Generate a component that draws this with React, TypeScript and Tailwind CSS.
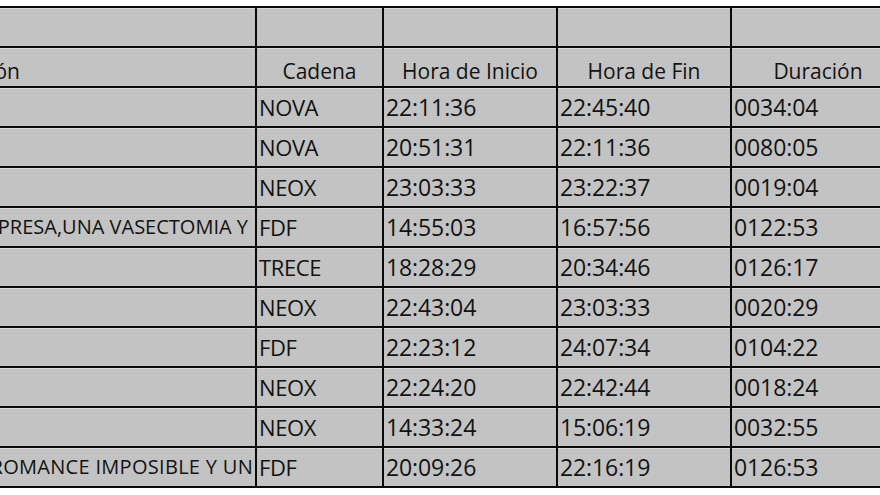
import React from 'react';

type Row = {
  desc?: string;
  descCls?: string; // right offset + spacing for overflowing description text
  cadena: string;
  inicio: string;
  fin: string;
  duracion: string;
};

const rows: Row[] = [
  { cadena: 'NOVA', inicio: '22:11:36', fin: '22:45:40', duracion: '0034:04' },
  { cadena: 'NOVA', inicio: '20:51:31', fin: '22:11:36', duracion: '0080:05' },
  { cadena: 'NEOX', inicio: '23:03:33', fin: '23:22:37', duracion: '0019:04' },
  {
    desc: 'UNA SORPRESA,UNA VASECTOMIA Y',
    descCls: 'mr-[7px] tracking-[0px]',
    cadena: 'FDF',
    inicio: '14:55:03',
    fin: '16:57:56',
    duracion: '0122:53',
  },
  { cadena: 'TRECE', inicio: '18:28:29', fin: '20:34:46', duracion: '0126:17' },
  { cadena: 'NEOX', inicio: '22:43:04', fin: '23:03:33', duracion: '0020:29' },
  { cadena: 'FDF', inicio: '22:23:12', fin: '24:07:34', duracion: '0104:22' },
  { cadena: 'NEOX', inicio: '22:24:20', fin: '22:42:44', duracion: '0018:24' },
  { cadena: 'NEOX', inicio: '14:33:24', fin: '15:06:19', duracion: '0032:55' },
  {
    desc: 'UN ROMANCE IMPOSIBLE Y UN',
    descCls: 'mr-[2px] tracking-[0.3px]',
    cadena: 'FDF',
    inicio: '20:09:26',
    fin: '22:16:19',
    duracion: '0126:53',
  },
];

const cell = 'bg-[#c3c3c3] shadow-[inset_0_1px_0_#dadada] overflow-hidden';
const chanCell = `${cell} flex items-center pl-[2px] text-[22px] tracking-[-0.4px]`;
const timeCell = `${cell} flex items-center pl-[2px] text-[23px] tracking-[-0.1px]`;
const headCell = `${cell} flex items-center justify-center pt-[9px] text-[21px]`;

export default function App() {
  return (
    <div
      className="w-[880px] h-[495px] overflow-hidden bg-white pt-[6px] text-[#121212] font-medium"
      style={{ fontFamily: '"Open Sans", "Noto Sans", sans-serif' }}
    >
      <div className="grid w-max grid-cols-[255px_125px_172px_172px_172px] auto-rows-[38px] gap-[2px] bg-[#0a0a0a] border-y-2 border-[#0a0a0a] leading-none">
        {/* blank title row */}
        <div className={cell} />
        <div className={cell} />
        <div className={cell} />
        <div className={cell} />
        <div className={cell} />

        {/* column headers */}
        <div className={`${cell} flex items-center justify-end pt-[9px] text-[21px]`}>
          <span className="shrink-0 whitespace-nowrap mr-[235px]">Descripción</span>
        </div>
        <div className={headCell}>Cadena</div>
        <div className={headCell}>Hora de Inicio</div>
        <div className={headCell}>Hora de Fin</div>
        <div className={headCell}>Duración</div>

        {rows.map((r, i) => (
          <React.Fragment key={i}>
            <div className={`${cell} flex items-center justify-end text-[20px]`}>
              {r.desc && (
                <span className={`shrink-0 whitespace-nowrap ${r.descCls}`}>{r.desc}</span>
              )}
            </div>
            <div className={chanCell}>{r.cadena}</div>
            <div className={timeCell}>{r.inicio}</div>
            <div className={timeCell}>{r.fin}</div>
            <div className={timeCell}>{r.duracion}</div>
          </React.Fragment>
        ))}
      </div>
    </div>
  );
}
